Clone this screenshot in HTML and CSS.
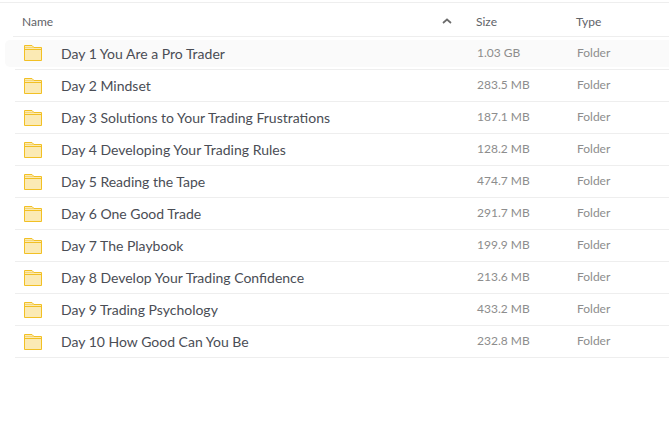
FILE: index.html
```html
<!DOCTYPE html>
<html lang="en">
<head>
    <meta charset="UTF-8">
    <title>Files</title>
    <link rel="stylesheet" href="styles.css">
</head>
<body>

<div class="list">
    <div class="head">
        <div class="name-col">Name
            <svg class="sort" width="10" height="6" viewBox="0 0 10 6"><path d="M1 5 L5 1.5 L9 5" fill="none" stroke="#6b6b6b" stroke-width="1.7"/></svg>
        </div>
        <div class="size-col">Size</div>
        <div class="type-col">Type</div>
    </div>

    <div class="row first">
        <div class="name-col"><svg class="folder" viewBox="0 0 18 16"><use href="#folder"/></svg>Day 1 You Are a Pro Trader</div>
        <div class="size-col">1.03 GB</div>
        <div class="type-col">Folder</div>
    </div>
    <div class="row">
        <div class="name-col"><svg class="folder" viewBox="0 0 18 16"><use href="#folder"/></svg>Day 2 Mindset</div>
        <div class="size-col">283.5 MB</div>
        <div class="type-col">Folder</div>
    </div>
    <div class="row">
        <div class="name-col"><svg class="folder" viewBox="0 0 18 16"><use href="#folder"/></svg>Day 3 Solutions to Your Trading Frustrations</div>
        <div class="size-col">187.1 MB</div>
        <div class="type-col">Folder</div>
    </div>
    <div class="row">
        <div class="name-col"><svg class="folder" viewBox="0 0 18 16"><use href="#folder"/></svg>Day 4 Developing Your Trading Rules</div>
        <div class="size-col">128.2 MB</div>
        <div class="type-col">Folder</div>
    </div>
    <div class="row">
        <div class="name-col"><svg class="folder" viewBox="0 0 18 16"><use href="#folder"/></svg>Day 5 Reading the Tape</div>
        <div class="size-col">474.7 MB</div>
        <div class="type-col">Folder</div>
    </div>
    <div class="row">
        <div class="name-col"><svg class="folder" viewBox="0 0 18 16"><use href="#folder"/></svg>Day 6 One Good Trade</div>
        <div class="size-col">291.7 MB</div>
        <div class="type-col">Folder</div>
    </div>
    <div class="row">
        <div class="name-col"><svg class="folder" viewBox="0 0 18 16"><use href="#folder"/></svg>Day 7 The Playbook</div>
        <div class="size-col">199.9 MB</div>
        <div class="type-col">Folder</div>
    </div>
    <div class="row">
        <div class="name-col"><svg class="folder" viewBox="0 0 18 16"><use href="#folder"/></svg>Day 8 Develop Your Trading Confidence</div>
        <div class="size-col">213.6 MB</div>
        <div class="type-col">Folder</div>
    </div>
    <div class="row">
        <div class="name-col"><svg class="folder" viewBox="0 0 18 16"><use href="#folder"/></svg>Day 9 Trading Psychology</div>
        <div class="size-col">433.2 MB</div>
        <div class="type-col">Folder</div>
    </div>
    <div class="row">
        <div class="name-col"><svg class="folder" viewBox="0 0 18 16"><use href="#folder"/></svg>Day 10 How Good Can You Be</div>
        <div class="size-col">232.8 MB</div>
        <div class="type-col">Folder</div>
    </div>
</div>

<svg class="defs" width="0" height="0">
    <symbol id="folder" viewBox="0 0 18 16">
        <path d="M.5 15.5 V.5 H8 L10 2.5 H17.5 V15.5 Z" fill="#fbeab4" stroke="#f2c024" stroke-width="1"/>
        <path d="M.5 2.5 H10" stroke="#f2c024" stroke-width="1" opacity=".45"/>
        <path d="M.5 4.5 H17.5" stroke="#f2c024" stroke-width="1"/>
    </symbol>
</svg>

</body>
</html>
```

FILE: styles.css
```css
body {
    margin: 0;
    font-family: Lato, sans-serif;
    background-color: #fff;
    overflow: hidden;
}

.list {
    margin-top: 2px;
    border-top: 1px solid #eeeeee;
}

.head {
    display: flex;
    align-items: center;
    height: 29px;
    padding-top: 4px;
    margin-left: 13px;
    padding-left: 9px;
    border-bottom: 1px solid #eeeeee;
    font-size: 12px;
    color: #5f6368;
}

.head .name-col {
    width: 431px;
    display: flex;
    justify-content: space-between;
    align-items: center;
    padding-right: 1px;
    box-sizing: border-box;
}

.sort {
    margin-top: -1px;
}

.head .size-col {
    width: 100px;
    margin-left: 23px;
}

.row {
    display: flex;
    align-items: center;
    height: 31px;
    margin-left: 15px;
    padding-left: 9px;
    border-bottom: 1px solid #eeeeee;
    font-size: 14px;
    color: #4a4d55;
}

.row.first {
    position: relative;
    height: 32px;
}

.row.first::before {
    content: "";
    position: absolute;
    left: -10px;
    right: 0;
    top: 3px;
    bottom: 2px;
    background-color: #fafafa;
    border-radius: 5px 0 0 5px;
    z-index: -1;
}

.row .name-col {
    width: 429px;
    flex-shrink: 0;
    display: flex;
    align-items: center;
}

.folder {
    width: 18px;
    height: 16px;
    margin-right: 19px;
    flex-shrink: 0;
}

.row .size-col {
    width: 100px;
    margin-left: 24px;
    margin-bottom: 2px;
    font-size: 12px;
    color: #8d8d8d;
}

.row .type-col {
    margin-bottom: 2px;
    font-size: 12px;
    color: #8d8d8d;
}

.defs {
    position: absolute;
}
```
